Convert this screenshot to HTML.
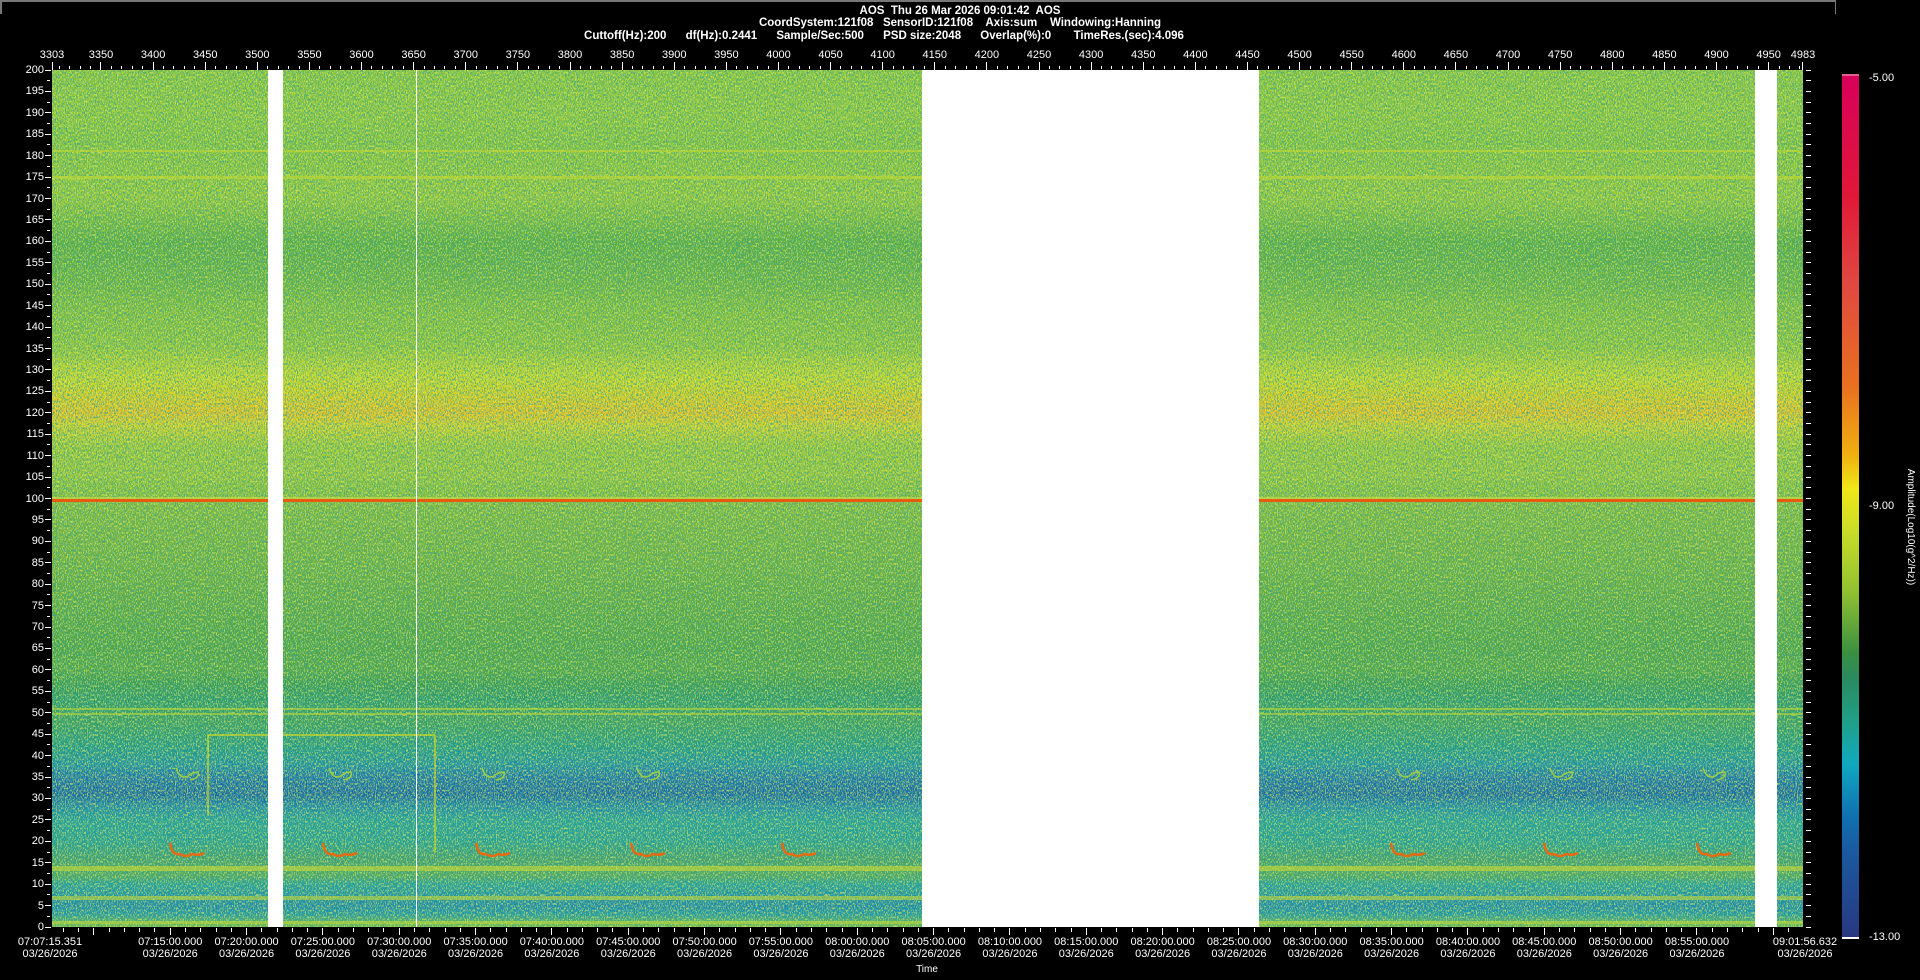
<!DOCTYPE html>
<html><head><meta charset="utf-8"><style>
html,body{margin:0;padding:0;background:#000;}
body{width:1920px;height:980px;position:relative;overflow:hidden;font-family:"Liberation Sans Narrow","Liberation Sans",sans-serif;color:#fff;}
.t{position:absolute;font-size:11px;white-space:nowrap;line-height:12px;}
.b{font-weight:bold;}
.c{transform:translateX(-50%);text-align:center;}
.r{transform:translateX(-100%);}
.tk{position:absolute;background:#fff;}
#frame{position:absolute;left:0;top:0;width:1836px;border-top:2px solid #777;border-left:2px solid #777;border-right:1px solid #777;box-sizing:border-box;pointer-events:none;height:14px;}
</style></head><body>
<div id="frame"></div>
<div class="t b c" style="left:960px;top:5px;font-size:11.5px">AOS&nbsp; Thu 26 Mar 2026 09:01:42&nbsp; AOS</div>
<div class="t b c" style="left:960px;top:17px;font-size:11.5px">CoordSystem:121f08&nbsp;&nbsp; SensorID:121f08&nbsp;&nbsp;&nbsp; Axis:sum&nbsp;&nbsp;&nbsp; Windowing:Hanning</div>
<div class="t b c" style="left:884px;top:30px;font-size:11.5px">Cuttoff(Hz):200&nbsp;&nbsp;&nbsp;&nbsp;&nbsp; df(Hz):0.2441&nbsp;&nbsp;&nbsp;&nbsp;&nbsp; Sample/Sec:500&nbsp;&nbsp;&nbsp;&nbsp;&nbsp; PSD size:2048&nbsp;&nbsp;&nbsp;&nbsp;&nbsp; Overlap(%):0&nbsp;&nbsp;&nbsp;&nbsp;&nbsp;&nbsp; TimeRes.(sec):4.096</div>

<svg style="position:absolute;left:52px;top:70px" width="1751" height="857" viewBox="0 0 1751 857">
<defs>
<linearGradient id="g" x1="0" y1="0" x2="0" y2="1">
<stop offset="0" stop-color="#8cc63a"/>
<stop offset="0.05" stop-color="#90c83a"/>
<stop offset="0.085" stop-color="#86c43a"/>
<stop offset="0.15" stop-color="#96c838"/>
<stop offset="0.2" stop-color="#5cae3e"/>
<stop offset="0.225" stop-color="#62b040"/>
<stop offset="0.25" stop-color="#6cb43e"/>
<stop offset="0.275" stop-color="#80be3a"/>
<stop offset="0.325" stop-color="#92c638"/>
<stop offset="0.34" stop-color="#b0d030"/>
<stop offset="0.36" stop-color="#c8d828"/>
<stop offset="0.375" stop-color="#d4d020"/>
<stop offset="0.4" stop-color="#e8c020"/>
<stop offset="0.415" stop-color="#d0d028"/>
<stop offset="0.44" stop-color="#9cc836"/>
<stop offset="0.475" stop-color="#98c638"/>
<stop offset="0.49" stop-color="#88c03a"/>
<stop offset="0.525" stop-color="#7cb83c"/>
<stop offset="0.575" stop-color="#70b23e"/>
<stop offset="0.625" stop-color="#5eaa40"/>
<stop offset="0.675" stop-color="#4ea444"/>
<stop offset="0.7" stop-color="#52a644"/>
<stop offset="0.715" stop-color="#3a9c50"/>
<stop offset="0.735" stop-color="#2a9a6a"/>
<stop offset="0.76" stop-color="#3aa060"/>
<stop offset="0.79" stop-color="#1e9a88"/>
<stop offset="0.81" stop-color="#1a90a8"/>
<stop offset="0.825" stop-color="#1a74b0"/>
<stop offset="0.845" stop-color="#1666a8"/>
<stop offset="0.86" stop-color="#1a88b0"/>
<stop offset="0.875" stop-color="#20a0a0"/>
<stop offset="0.9" stop-color="#22a098"/>
<stop offset="0.92" stop-color="#40a070"/>
<stop offset="0.94" stop-color="#50a860"/>
<stop offset="0.95" stop-color="#22a0a0"/>
<stop offset="0.975" stop-color="#1a88b0"/>
<stop offset="0.985" stop-color="#1e98a8"/>
<stop offset="1" stop-color="#80c040"/>
</linearGradient>
<filter id="nd" x="0" y="0" width="100%" height="100%">
<feTurbulence type="fractalNoise" baseFrequency="0.9 0.45" numOctaves="2" seed="3"/>
<feColorMatrix type="matrix" values="0 0 0 0 0.05  0 0 0 0 0.38  0 0 0 0 0.3  7 0 0 0 -3.3"/>
</filter>
<filter id="nl" x="0" y="0" width="100%" height="100%">
<feTurbulence type="fractalNoise" baseFrequency="0.9 0.45" numOctaves="2" seed="11"/>
<feColorMatrix type="matrix" values="0 0 0 0 0.85  0 0 0 0 0.9  0 0 0 0 0.1  7 0 0 0 -3.6"/>
</filter>
</defs>
<rect width="1751" height="857" fill="url(#g)"/>
<rect width="1751" height="857" filter="url(#nd)" opacity="0.8"/>
<rect width="1751" height="857" filter="url(#nl)" opacity="0.6"/>
<g fill="#c8dc30" opacity="0.55">
<rect x="0" y="80" width="1751" height="2"/>
<rect x="0" y="106" width="1751" height="3"/>
<rect x="0" y="427" width="1751" height="2" fill="#d8e040"/>
<rect x="0" y="638" width="1751" height="2"/>
<rect x="0" y="643" width="1751" height="2"/>
<rect x="0" y="796" width="1751" height="5" fill="#d4dc30"/>
<rect x="0" y="826" width="1751" height="4" fill="#d0dc30"/>
<rect x="0" y="851" width="1751" height="3"/>
</g>
<rect x="0" y="429" width="1751" height="3" fill="#e85a10"/>
<g stroke="#d8dc20" fill="none" stroke-width="1.2">
<path d="M156 745 V665 H383" />
<path d="M383 665 V783" />
</g>
<g stroke="#e86a10" fill="none" stroke-width="2.5">
<path id="sq" d="M118 773 Q120 786 128 784 Q134 788 140 784 Q146 786 152 783"/>
<use href="#sq" x="153"/><use href="#sq" x="306"/><use href="#sq" x="461"/><use href="#sq" x="612"/>
<use href="#sq" x="1221"/><use href="#sq" x="1374"/><use href="#sq" x="1527"/>
</g>
<g stroke="#a0d040" fill="none" stroke-width="1.5">
<path id="gq" d="M124 698 Q128 710 136 706 Q140 702 146 702 Q148 708 138 710"/>
<use href="#gq" x="153"/><use href="#gq" x="306"/><use href="#gq" x="461"/>
<use href="#gq" x="1221"/><use href="#gq" x="1374"/><use href="#gq" x="1527"/>
</g>
<g fill="#fff">
<rect x="216" y="0" width="15" height="857"/>
<rect x="870" y="0" width="337" height="857"/>
<rect x="1703" y="0" width="22" height="857"/>
<rect x="364" y="0" width="1" height="857"/>
</g>
</svg>

<div style="position:absolute;left:1842px;top:76px;width:17px;height:861px;background:linear-gradient(to bottom,#d8005a 0%,#e01838 14%,#e04840 24%,#e87020 36%,#f0b010 44%,#f0e818 48%,#c8dc28 53%,#90c030 60%,#3a9040 67%,#2a8a60 70%,#20a088 75%,#10a8c0 80%,#1070b0 86%,#1a5aa0 90%,#283880 100%)"></div>
<div style="position:absolute;left:1842px;top:74px;width:17px;height:2px;background:#e06090"></div>
<div style="position:absolute;left:1842px;top:937px;width:17px;height:2px;background:#fff"></div>
<div class="t" style="left:1869px;top:72px">-5.00</div>
<div class="t" style="left:1869px;top:500px">-9.00</div>
<div class="t" style="left:1869px;top:931px">-13.00</div>
<div class="t" style="left:1910px;top:527px;transform:translate(-50%,-50%) rotate(90deg);font-size:10px">Amplitude(Log10(g^2/Hz))</div>
<div class="t c" style="left:927px;top:964px;font-size:10px">Time</div>
<div id="ax"></div>
<script>
var h='';
var L=52,R=1803,T=70,B=927,W=R-L;
for(var f=0;f<=200;f+=2.5){var y=B-f*(B-T)/200;
 if(f%5==0){h+='<div class="tk" style="left:45px;top:'+(y-0.5)+'px;width:6px;height:1px"></div>';
  h+='<div class="t r" style="left:44px;top:'+(y-6)+'px">'+f+'</div>';}
 else h+='<div class="tk" style="left:47px;top:'+(y-0.5)+'px;width:3px;height:1px"></div>';
 h+='<div class="tk" style="left:1806px;top:'+(y-0.5)+'px;width:5px;height:1px"></div>';}
for(var v=3310;v<=4980;v+=10){var x=L+(v-3303)*W/1680;var maj=(v%50==0);
 h+='<div class="tk" style="left:'+(x-0.5)+'px;top:'+(maj?62:66)+'px;width:1px;height:'+(maj?8:3)+'px"></div>';
 if(maj)h+='<div class="t c" style="left:'+x+'px;top:49px">'+v+'</div>';}
h+='<div class="tk" style="left:'+(L)+'px;top:62px;width:1px;height:8px"></div><div class="t c" style="left:'+L+'px;top:49px">3303</div>';
h+='<div class="tk" style="left:'+(R-1)+'px;top:62px;width:1px;height:8px"></div><div class="t c" style="left:'+R+'px;top:49px">4983</div>';
var t0=7*3600+7*60+15.351,tt=6881.281;
for(var m=7*60+8;m<=9*60+1;m++){var s=m*60;var x=L+(s-t0)*W/tt;var maj=(m%5==0);
 h+='<div class="tk" style="left:'+(x-0.5)+'px;top:928px;width:1px;height:'+(maj?7:4)+'px"></div>';
 if(maj&&m>7*60+10&&m<9*60){var hh=Math.floor(m/60),mm=m%60;var lab='0'+hh+':'+(mm<10?'0':'')+mm+':00.000';
  h+='<div class="t c" style="left:'+x+'px;top:936px">'+lab+'<br>03/26/2026</div>';}}
h+='<div class="t c" style="left:'+(L-2)+'px;top:936px">07:07:15.351<br>03/26/2026</div>';
h+='<div class="t c" style="left:'+(R+2)+'px;top:936px">09:01:56.632<br>03/26/2026</div>';
document.getElementById('ax').innerHTML=h;
</script>
</body></html>
